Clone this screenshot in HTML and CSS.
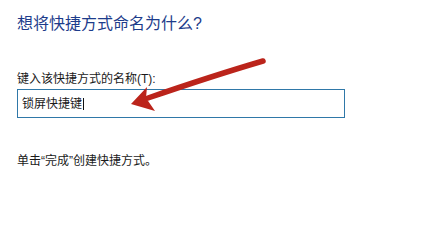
FILE: index.html
```html
<!DOCTYPE html>
<html lang="zh-CN">
<head>
<meta charset="utf-8">
<title>创建快捷方式</title>
<link rel="stylesheet" href="styles.css">
</head>
<body>
<div class="page">
  <h1 class="title">想将快捷方式命名为什么?</h1>
  <label class="label">键入该快捷方式的名称(T):</label>
  <div class="field"><span class="value">锁屏快捷键</span><span class="caret"></span></div>
  <p class="hint">单击“完成”创建快捷方式。</p>
  <svg class="arrow" width="448" height="205" viewBox="0 0 448 205" aria-hidden="true">
    <path d="M263 61 Q212 76 148 98" fill="none" stroke="#bb241b" stroke-width="5.5" stroke-linecap="round"/>
    <polygon points="131,104 147,87 146,98 155,111" fill="#bb241b"/>
  </svg>
</div>
</body>
</html>
```

FILE: styles.css
```css
html, body {
  margin: 0;
  padding: 0;
  background: #ffffff;
}

.page {
  position: relative;
  width: 448px;
  height: 205px;
  padding: 14px 0 0 17px;
  box-sizing: border-box;
  font-family: "Liberation Sans", "Noto Sans CJK SC", sans-serif;
  color: #1a1a1a;
  overflow: hidden;
}

.title {
  margin: 0;
  font-size: 16px;
  line-height: 20px;
  font-weight: normal;
  color: #1d3c8b;
}

.label {
  display: block;
  margin-top: 37px;
  font-size: 12px;
  line-height: 16px;
}

.field {
  display: flex;
  align-items: center;
  margin-top: 2px;
  width: 328px;
  height: 29px;
  box-sizing: border-box;
  border: 1px solid #2f78a8;
  padding-left: 4px;
  font-size: 12px;
  line-height: 16px;
}

.caret {
  display: inline-block;
  width: 0;
  height: 12px;
  border-left: 1px solid #111;
  margin-left: 1px;
}

.hint {
  margin: 35px 0 0;
  font-size: 12px;
  line-height: 16px;
}

.arrow {
  position: absolute;
  left: 0;
  top: 0;
  pointer-events: none;
}
```
